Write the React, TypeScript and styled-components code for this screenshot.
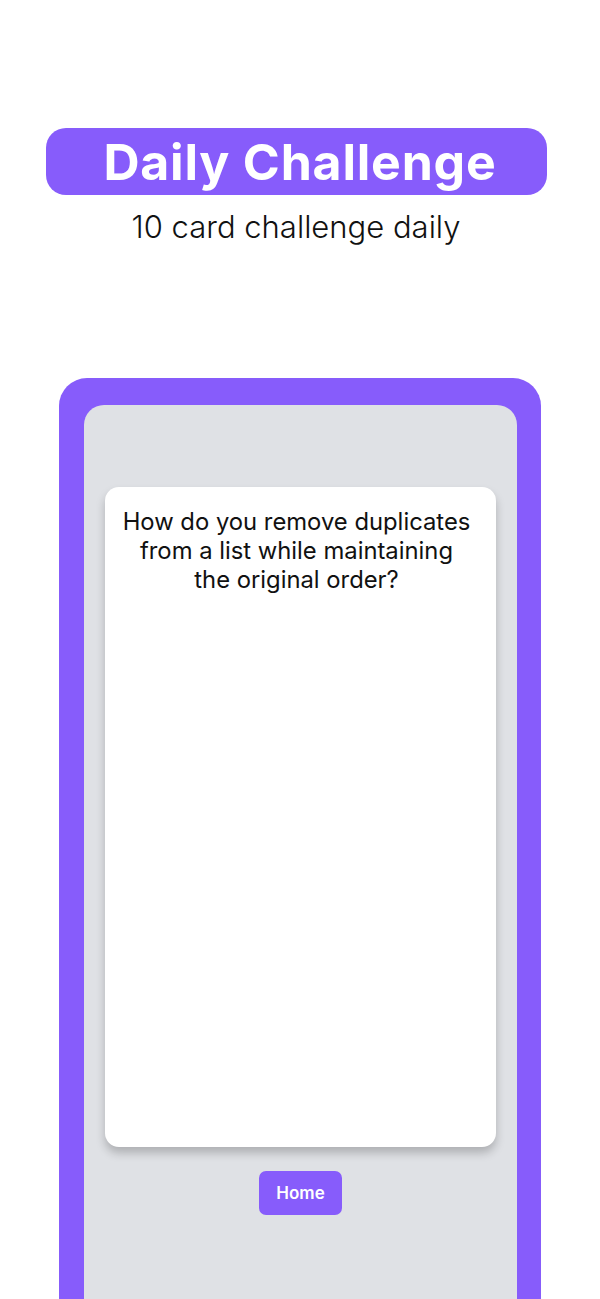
import React from "react";
import styled, { createGlobalStyle } from "styled-components";

const Global = createGlobalStyle`
  html, body { margin: 0; padding: 0; background: #ffffff; }
  body { font-family: Inter, "Noto Sans", sans-serif; overflow: hidden; }
  * { box-sizing: border-box; }
`;

const Page = styled.div`
  width: 600px;
  height: 1299px;
  display: flex;
  flex-direction: column;
  align-items: center;
  padding-top: 128px;
  overflow: hidden;
`;

const TitlePill = styled.div`
  width: 501px;
  height: 67px;
  margin-left: -7px;
  padding-left: 7px;
  border-radius: 20px;
  background: #875cfb;
  display: flex;
  align-items: center;
  justify-content: center;
`;

const Title = styled.h1`
  margin: 0;
  color: #ffffff;
  font-family: Inter, "Noto Sans", sans-serif;
  font-weight: 700;
  font-size: 50px;
  letter-spacing: 0.8px;
  line-height: 1;
`;

const Subtitle = styled.p`
  margin: 12px 8px 0 0;
  color: #111111;
  font-family: Inter, "Noto Sans", sans-serif;
  font-weight: 300;
  font-size: 31px;
  line-height: 40px;
`;

const Frame = styled.div`
  margin-top: 131px;
  width: 482px;
  flex: 1;
  background: #875cfb;
  border-radius: 28px 28px 0 0;
  padding: 27px 24px 0 25px;
  display: flex;
`;

const Inner = styled.div`
  flex: 1;
  background: #dfe1e5;
  border-radius: 20px 20px 0 0;
  padding: 82px 21px 0 21px;
  display: flex;
  flex-direction: column;
  align-items: center;
`;

const Card = styled.div`
  width: 391px;
  height: 660px;
  background: #ffffff;
  border-radius: 14px;
  box-shadow: 0 6px 10px rgba(0, 0, 0, 0.22);
  padding: 20px 22px 20px 14px;
`;

const Question = styled.p`
  margin: 0;
  text-align: center;
  color: #111111;
  font-family: Inter, "Noto Sans", sans-serif;
  font-size: 23.8px;
  line-height: 29px;
  font-weight: 400;
`;

const HomeButton = styled.button`
  margin-top: 24px;
  width: 83px;
  height: 44px;
  border: none;
  border-radius: 7px;
  background: #875cfb;
  color: #ffffff;
  font-family: Inter, "Noto Sans", sans-serif;
  font-weight: 600;
  font-size: 17px;
  cursor: pointer;
`;

export default function App() {
  return (
    <>
      <Global />
      <Page>
        <TitlePill>
          <Title>Daily Challenge</Title>
        </TitlePill>
        <Subtitle>10 card challenge daily</Subtitle>
        <Frame>
          <Inner>
            <Card>
              <Question>
                How do you remove duplicates from a list while maintaining the
                original order?
              </Question>
            </Card>
            <HomeButton>Home</HomeButton>
          </Inner>
        </Frame>
      </Page>
    </>
  );
}
